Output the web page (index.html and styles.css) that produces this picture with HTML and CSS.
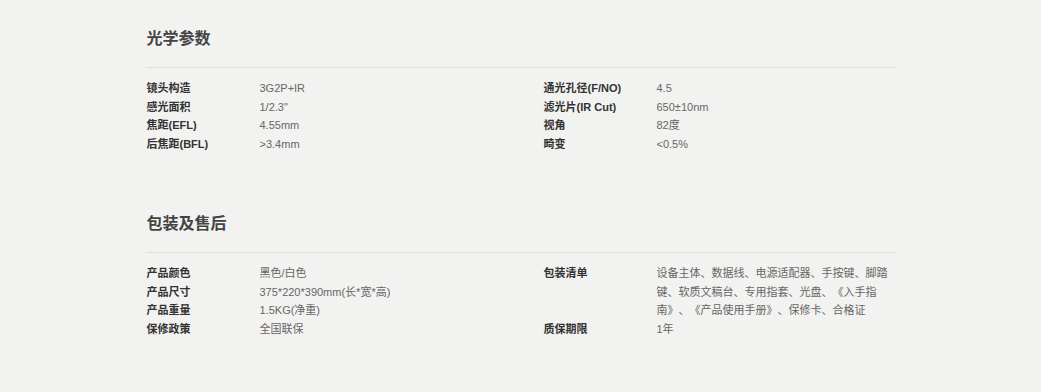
FILE: index.html
```html
<!DOCTYPE html>
<html lang="zh-CN">
<head>
<meta charset="utf-8">
<title>参数</title>
<link rel="stylesheet" href="styles.css">
</head>
<body>
<main class="page">
  <section class="section">
    <h2 class="section-title">光学参数</h2>
    <div class="cols">
      <dl class="spec">
        <dt>镜头构造</dt><dd>3G2P+IR</dd>
        <dt>感光面积</dt><dd>1/2.3"</dd>
        <dt>焦距(EFL)</dt><dd>4.55mm</dd>
        <dt>后焦距(BFL)</dt><dd>&gt;3.4mm</dd>
      </dl>
      <dl class="spec">
        <dt>通光孔径(F/NO)</dt><dd>4.5</dd>
        <dt>滤光片(IR Cut)</dt><dd>650±10nm</dd>
        <dt>视角</dt><dd>82度</dd>
        <dt>畸变</dt><dd>&lt;0.5%</dd>
      </dl>
    </div>
  </section>
  <section class="section">
    <h2 class="section-title">包装及售后</h2>
    <div class="cols">
      <dl class="spec">
        <dt>产品颜色</dt><dd>黑色/白色</dd>
        <dt>产品尺寸</dt><dd>375*220*390mm(长*宽*高)</dd>
        <dt>产品重量</dt><dd>1.5KG(净重)</dd>
        <dt>保修政策</dt><dd>全国联保</dd>
      </dl>
      <dl class="spec">
        <dt>包装清单</dt><dd>设备主体、数据线、电源适配器、手按键、脚踏键、软质文稿台、专用指套、光盘、《入手指南》、《产品使用手册》、保修卡、合格证</dd>
        <dt>质保期限</dt><dd>1年</dd>
      </dl>
    </div>
  </section>
</main>
</body>
</html>
```

FILE: styles.css
```css
html, body {
  margin: 0;
  padding: 0;
}
body {
  background: #f2f2f0;
  font-family: "Liberation Sans", "Noto Sans CJK SC", sans-serif;
  color: #333;
}
.page {
  width: 748px;
  margin: 0 auto;
  padding-top: 27px;
}
.section + .section {
  margin-top: 58px;
}
.section-title {
  margin: 0;
  font-size: 16px;
  line-height: 24px;
  font-weight: bold;
  color: #444;
  padding-bottom: 16px;
  border-bottom: 1px solid #dcdcdc;
}
.cols {
  display: grid;
  grid-template-columns: 397px 1fr;
  margin-top: 11px;
}
.spec {
  margin: 0;
  display: grid;
  grid-template-columns: 113px 1fr;
  font-size: 11px;
  line-height: 18.7px;
  align-content: start;
  text-spacing-trim: space-all;
}
.spec dt {
  font-weight: bold;
  color: #333;
}
.spec dd {
  margin: 0;
  color: #666;
}
```
